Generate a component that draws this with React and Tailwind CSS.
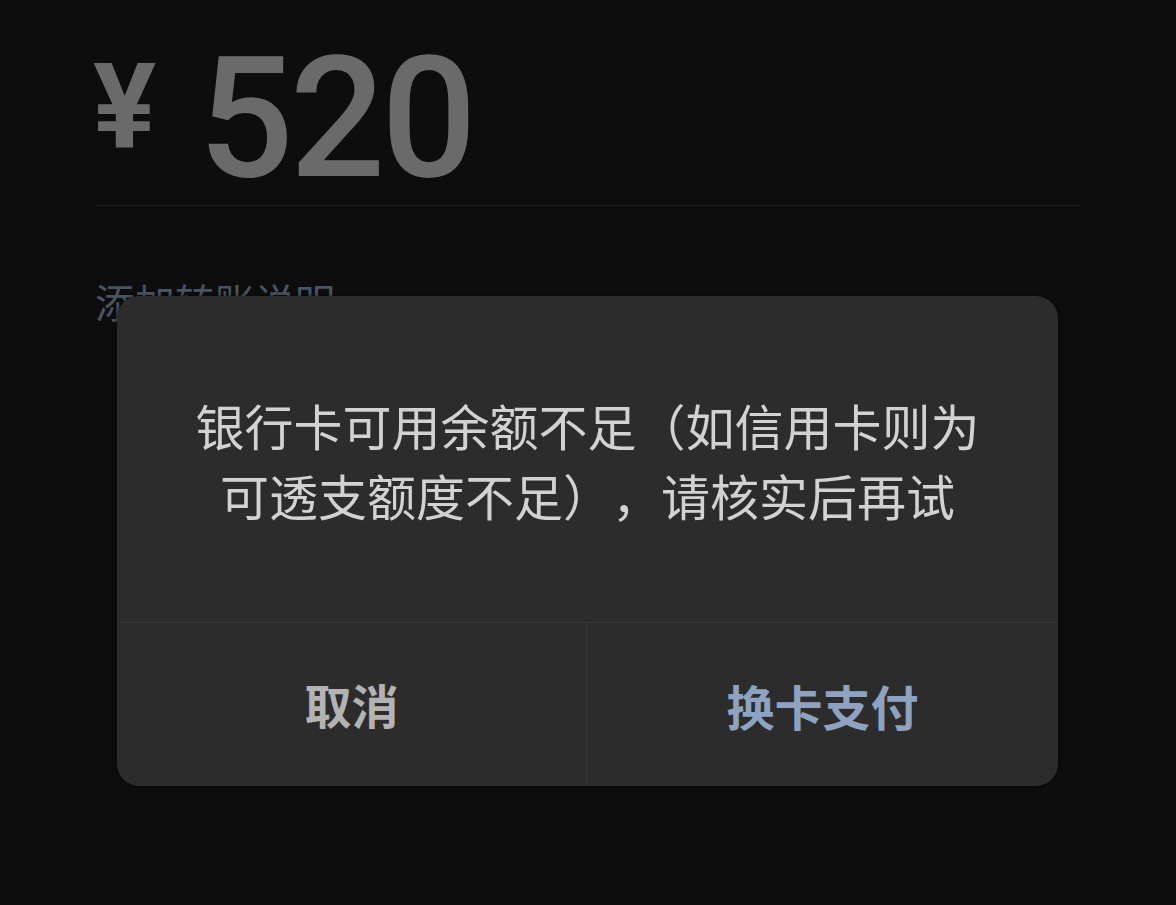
export default function App() {
  return (
    <div className="relative w-[1176px] h-[905px] overflow-hidden bg-[#0d0d0d]" style={{ fontFamily: '"Noto Sans CJK SC", "Noto Sans", sans-serif' }}>
      <div className="px-[95px] pt-[30px]">
        <div className="flex items-start text-[#6a6a6a]" style={{ fontFamily: 'Roboto, "Noto Sans", sans-serif' }}>
          <span className="text-[118px] leading-none font-bold mt-[18px] ml-[-2px]">¥</span>
          <span className="text-[168px] leading-none font-medium ml-[42px] mt-[5px] tracking-[-4px]">520</span>
        </div>
        <div className="mt-[2px] h-px w-[986px] bg-[#1d1d1d]" />
        <div className="mt-[71px] text-[40px] leading-[48px] text-[#4b5462]">添加转账说明</div>
      </div>

      <div className="absolute left-[117px] top-[296px] w-[941px] h-[490px] rounded-[22px] bg-[#2c2c2c] flex flex-col overflow-hidden shadow-[0_0_4px_rgba(0,0,0,0.6)]">
        <div className="h-[326px] flex flex-col items-center justify-center text-[49px] leading-[70px] text-[#d2d2d2] [text-spacing-trim:space-all] pt-[2px]">
          <span>银行卡可用余额不足（如信用卡则为</span>
          <span>可透支额度不足），请核实后再试</span>
        </div>
        <div className="h-px bg-[#363636]" />
        <div className="flex flex-1">
          <div className="w-[470px] flex items-center justify-center text-[47px] font-bold text-[#b3b3b3] border-r border-[#363636]">取消</div>
          <div className="flex-1 flex items-center justify-center text-[48px] font-bold text-[#8ea3c1]">换卡支付</div>
        </div>
      </div>
    </div>
  );
}
